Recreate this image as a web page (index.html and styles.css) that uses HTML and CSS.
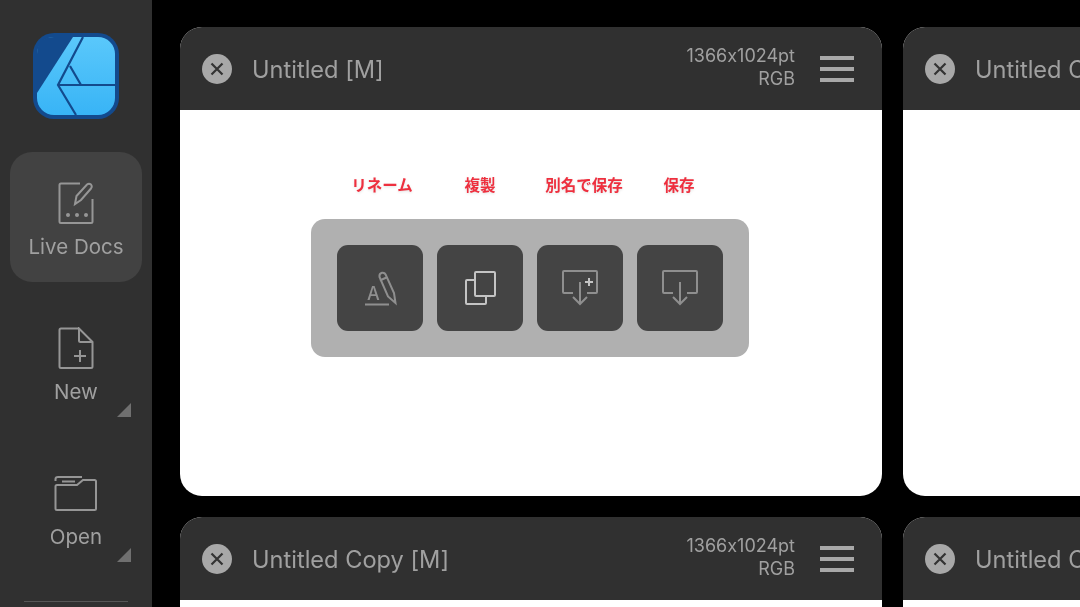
FILE: index.html
```html
<!DOCTYPE html>
<html lang="en">
<head>
    <meta charset="UTF-8">
    <meta name="viewport" content="width=device-width, initial-scale=1.0">
    <title>Affinity Designer - Live Docs</title>
    <link rel="stylesheet" href="styles.css">
</head>
<body>
<div class="app">

    <!-- Sidebar -->
    <aside class="sidebar">
        <svg class="logo" viewBox="0 0 86 86">
            <defs>
                <linearGradient id="logoFill" x1="0" y1="0" x2="0" y2="1">
                    <stop offset="0" stop-color="#5ac8fb"/>
                    <stop offset="1" stop-color="#38b4f6"/>
                </linearGradient>
            </defs>
            <rect width="86" height="86" rx="21" fill="#134a8d"/>
            <rect x="4" y="4" width="78" height="78" rx="17" fill="url(#logoFill)"/>
            <path d="M4 60 L40 4 H21 Q4 4 4 21 Z" fill="#134a8d"/>
            <path d="M50 4 L25 52 L43 82 M25 52 H82 M37 33 L48 52" fill="none" stroke="#134a8d" stroke-width="2.2"/>
        </svg>

        <div class="nav-item active">
            <svg class="nav-icon" viewBox="0 0 44 42">
                <path d="M26 1.5 H7 Q5.5 1.5 5.5 3 V39.5 Q5.5 41 7 41 H37 Q38.5 41 38.5 39.5 V17"/>
                <path d="M21 22 L22.500 14 L33 2.500 Q35 1 37 2.500 Q38.500 4.500 37 6.500 L27 18 Z"/>
                <circle class="dot" cx="14" cy="33" r="2"/>
                <circle class="dot" cx="23" cy="33" r="2"/>
                <circle class="dot" cx="32" cy="33" r="2"/>
            </svg>
            <span class="nav-label">Live Docs</span>
        </div>

        <div class="nav-item">
            <svg class="nav-icon" viewBox="0 0 44 42">
                <path d="M25 1.500 H7 Q5.500 1.500 5.500 3 V39.500 Q5.500 41 7 41 H37 Q38.500 41 38.500 39.500 V15 L25 1.500 V13.500 Q25 15 26.500 15 H38.500"/>
                <path d="M20 29 H32 M26 23 V35"/>
            </svg>
            <span class="nav-label">New</span>
            <span class="corner"></span>
        </div>

        <div class="nav-item">
            <svg class="nav-icon" viewBox="0 0 44 42">
                <path d="M3 13 H23 L29 8 H40.500 Q42 8 42 9.500 V36.500 Q42 38 40.500 38 H3 Q1.500 38 1.500 36.500 V14.500 Q1.500 13 3 13 Z"/>
                <path d="M1.500 9 V7 Q1.500 5 4 5 H28 M8 9.500 H21"/>
            </svg>
            <span class="nav-label">Open</span>
            <span class="corner"></span>
        </div>

        <div class="side-divider"></div>
    </aside>

    <!-- Document grid -->
    <main class="docs">
        <section class="doc-card">
            <header class="doc-head">
                <span class="close-btn">
                    <svg viewBox="0 0 30 30"><path d="M9.500 9.500 L20.500 20.500 M20.500 9.500 L9.500 20.500"/></svg>
                </span>
                <span class="doc-title">Untitled [M]</span>
                <span class="doc-meta">1366x1024pt<br>RGB</span>
                <span class="burger"><i></i><i></i><i></i></span>
            </header>
            <div class="doc-body">
                <div class="tool-labels">
                    <span>リネーム</span>
                    <span>複製</span>
                    <span>別名で保存</span>
                    <span>保存</span>
                </div>
                <div class="toolbar">
                    <div class="tool-btn">
                        <svg viewBox="0 0 40 40">
                            <path d="M19.500 9 Q19 5.500 22 4.800 Q25 4.500 25.800 7 L34 25 L35.500 35 L28 28.500 Z M19.800 12.500 L26.500 9.500"/>
                            <path d="M5 36.500 H29"/>
                            <text class="tool-letter" x="7" y="32">A</text>
                        </svg>
                    </div>
                    <div class="tool-btn">
                        <svg class="bright" viewBox="0 0 40 40">
                            <rect x="15" y="4" width="20" height="24" rx="1"/>
                            <path d="M15 12 H7 Q6 12 6 13 V35 Q6 36 7 36 H25 Q26 36 26 35 V28"/>
                        </svg>
                    </div>
                    <div class="tool-btn">
                        <svg viewBox="0 0 40 40">
                            <path d="M13 25 H4 Q3 25 3 24 V4 Q3 3 4 3 H36 Q37 3 37 4 V24 Q37 25 36 25 H27"/>
                            <path d="M20 14 V36 M13 29 L20 36 L27 29"/>
                            <path class="bright" d="M29 10 V18 M25 14 H33"/>
                        </svg>
                    </div>
                    <div class="tool-btn">
                        <svg viewBox="0 0 40 40">
                            <path d="M13 25 H4 Q3 25 3 24 V4 Q3 3 4 3 H36 Q37 3 37 4 V24 Q37 25 36 25 H27"/>
                            <path d="M20 14 V36 M13 29 L20 36 L27 29"/>
                        </svg>
                    </div>
                </div>
            </div>
        </section>

        <section class="doc-card">
            <header class="doc-head">
                <span class="close-btn">
                    <svg viewBox="0 0 30 30"><path d="M9.500 9.500 L20.500 20.500 M20.500 9.500 L9.500 20.500"/></svg>
                </span>
                <span class="doc-title">Untitled Copy 2 [M]</span>
            </header>
            <div class="doc-body"></div>
        </section>

        <section class="doc-card">
            <header class="doc-head">
                <span class="close-btn">
                    <svg viewBox="0 0 30 30"><path d="M9.500 9.500 L20.500 20.500 M20.500 9.500 L9.500 20.500"/></svg>
                </span>
                <span class="doc-title">Untitled Copy [M]</span>
                <span class="doc-meta">1366x1024pt<br>RGB</span>
                <span class="burger"><i></i><i></i><i></i></span>
            </header>
            <div class="doc-body"></div>
        </section>

        <section class="doc-card">
            <header class="doc-head">
                <span class="close-btn">
                    <svg viewBox="0 0 30 30"><path d="M9.500 9.500 L20.500 20.500 M20.500 9.500 L9.500 20.500"/></svg>
                </span>
                <span class="doc-title">Untitled Copy 3 [M]</span>
            </header>
            <div class="doc-body"></div>
        </section>
    </main>
</div>
</body>
</html>
```

FILE: styles.css
```css
* {
    margin: 0;
    padding: 0;
    box-sizing: border-box;
}

html, body {
    height: 100%;
    overflow: hidden;
    background: #000;
}

body {
    font-family: Inter, "Noto Sans CJK JP", sans-serif;
    font-feature-settings: "calt" 0;
}

.app {
    display: flex;
    height: 607px;
    overflow: hidden;
    filter: blur(0.6px);
}

/* Sidebar */
.sidebar {
    flex: 0 0 152px;
    display: flex;
    flex-direction: column;
    align-items: center;
    padding: 33px 10px 0;
    background: #303030;
}

.logo {
    width: 86px;
    height: 86px;
    margin-bottom: 33px;
    flex: none;
}

.nav-item {
    position: relative;
    flex: none;
    width: 132px;
    height: 130px;
    margin-bottom: 15px;
    padding-top: 30px;
    display: flex;
    flex-direction: column;
    align-items: center;
    border-radius: 22px;
}

.nav-item.active {
    background: #424242;
}

.nav-icon {
    width: 44px;
    height: 42px;
    flex: none;
    fill: none;
    stroke: #969696;
    stroke-width: 2;
}

.nav-icon .dot {
    fill: #969696;
    stroke: none;
}

.nav-label {
    margin-top: 13px;
    font-size: 20.5px;
    line-height: 20px;
    color: #a0a0a0;
}

.corner {
    position: absolute;
    right: 11px;
    bottom: 10px;
    width: 14px;
    height: 14px;
    background: #707070;
    clip-path: polygon(100% 0, 100% 100%, 0 100%);
}

.side-divider {
    width: 104px;
    height: 1px;
    margin-top: 14px;
    flex: none;
    background: #565656;
}

/* Document grid */
.docs {
    flex: none;
    display: grid;
    grid-template-columns: 702px 702px;
    grid-auto-rows: 469px;
    gap: 21px;
    padding: 27px 0 0 28px;
}

.doc-card {
    border-radius: 22px;
    overflow: hidden;
    background: #fff;
    display: flex;
    flex-direction: column;
}

.doc-head {
    flex: 0 0 83px;
    display: flex;
    align-items: center;
    padding: 0 28px 0 22px;
    background: #303030;
    color: #a0a0a0;
}

.close-btn {
    flex: none;
    width: 30px;
    height: 30px;
    margin-right: 20px;
    border-radius: 50%;
    background: #a8a8a8;
}

.close-btn svg {
    display: block;
    fill: none;
    stroke: #333;
    stroke-width: 2.2;
}

.doc-title {
    flex: 1;
    margin-top: 2px;
    font-size: 23.6px;
    white-space: nowrap;
}

.doc-meta {
    flex: none;
    margin: 0 25px 4px 0;
    font-size: 18px;
    line-height: 23px;
    text-align: right;
}

.burger {
    flex: none;
    width: 34px;
    display: flex;
    flex-direction: column;
    gap: 7px;
}

.burger i {
    height: 4px;
    background: #a8a8a8;
}

.doc-body {
    flex: 1;
    padding-top: 63px;
}

/* Toolbar with annotations */
.tool-labels {
    display: grid;
    grid-template-columns: 104px 92px 116px 74px;
    margin-left: 150px;
    font-family: "Noto Sans CJK JP", sans-serif;
    font-size: 15.5px;
    font-weight: 700;
    line-height: 22px;
    color: #ee2f3e;
    text-align: center;
    text-shadow: 0 1px 3px rgba(0, 0, 0, 0.12);
}

.toolbar {
    display: flex;
    gap: 14px;
    width: 438px;
    height: 138px;
    margin: 24px 0 0 131px;
    padding: 26px;
    background: #b0b0b0;
    border-radius: 14px;
}

.tool-btn {
    flex: none;
    width: 86px;
    height: 86px;
    display: flex;
    align-items: center;
    justify-content: center;
    background: #444;
    border-radius: 11px;
}

.tool-btn svg {
    width: 40px;
    height: 40px;
    fill: none;
    stroke: #8f8f8f;
    stroke-width: 2;
}

.tool-btn .bright {
    stroke: #c4c4c4;
}

.tool-letter {
    font-size: 18px;
    font-weight: 500;
    fill: #8f8f8f;
    stroke: none;
}
```
